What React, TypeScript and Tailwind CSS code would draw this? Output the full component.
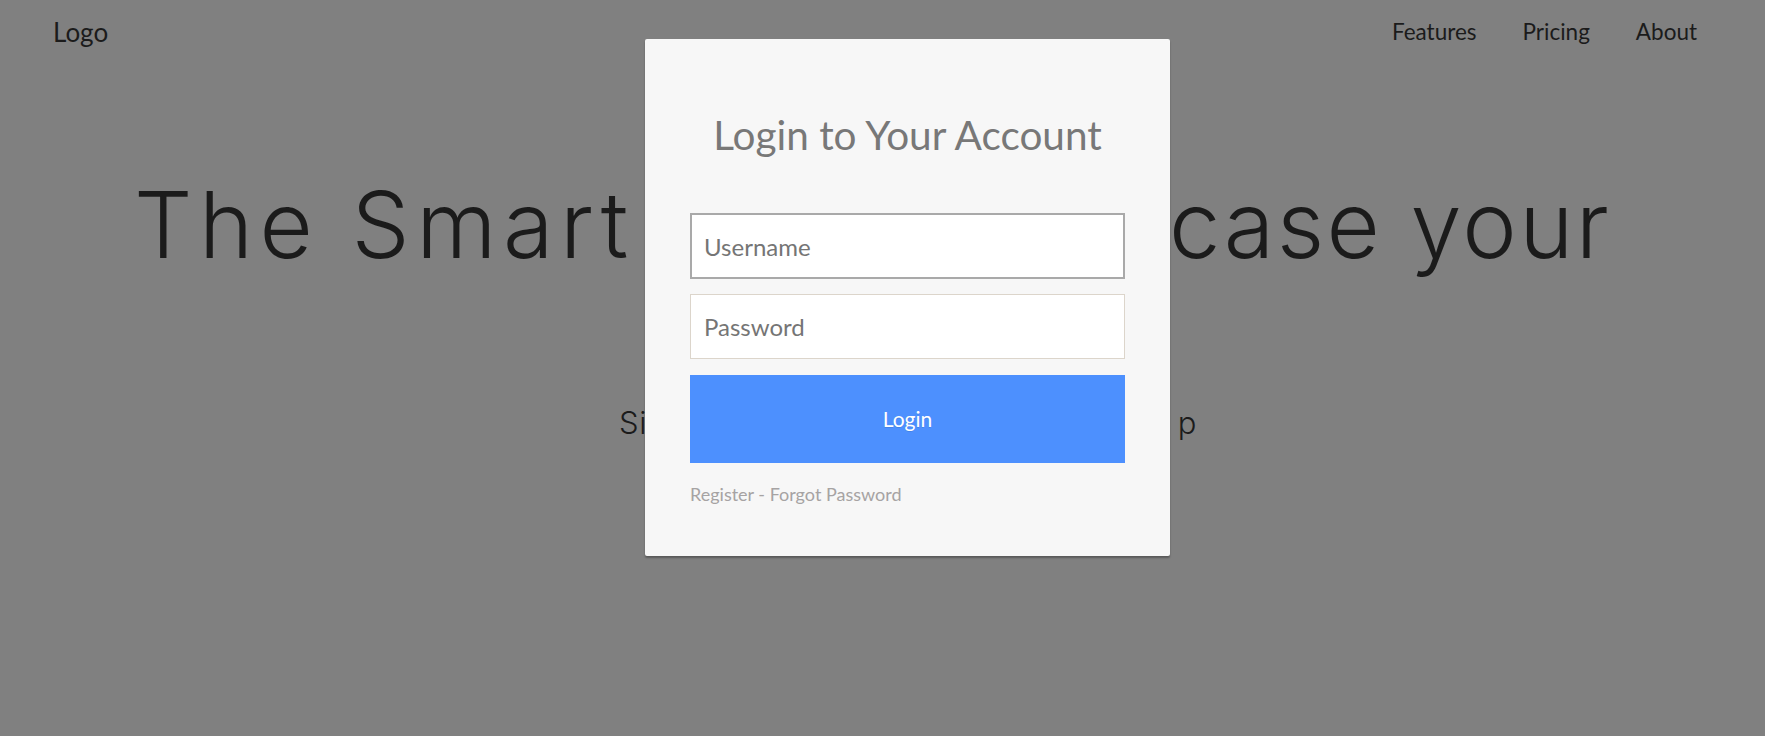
import React from 'react';

const NAV_LINKS = ['Features', 'Pricing', 'About'];

function LoginModal() {
  return (
    <div className="absolute left-[645px] top-[39px] w-[525px] rounded-[2px] bg-[#f7f7f7] px-[45px] pt-[72px] pb-[50px] shadow-[0_2px_2px_rgba(0,0,0,0.3)]">
      <h1 className="text-center text-[40.5px] leading-[48px] text-[#787878]">Login to Your Account</h1>
      <form className="mt-[54px] flex flex-col" onSubmit={(e) => e.preventDefault()}>
        <input
          type="text"
          placeholder="Username"
          className="h-[66px] w-full border-2 border-[#a9a9a9] bg-white px-[12px] text-[24px] text-[#333] outline-none placeholder:text-[#757575]"
        />
        <input
          type="password"
          placeholder="Password"
          className="mt-[15px] h-[65px] w-full border border-[#dcd5cb] bg-white px-[13px] text-[24px] text-[#333] outline-none placeholder:text-[#757575]"
        />
        <button
          type="submit"
          className="mt-[16px] h-[88px] w-full bg-[#4d90fe] text-[21px] text-white [text-shadow:0_1px_rgba(0,0,0,0.1)]"
        >
          Login
        </button>
      </form>
      <div className="mt-[21px] text-[18px] leading-[21.6px] text-[#a6a3a3]">
        <a href="#">Register</a> - <a href="#">Forgot Password</a>
      </div>
    </div>
  );
}

export default function App() {
  return (
    <div className="relative h-[736px] overflow-hidden bg-[#808080] font-['Lato',sans-serif] text-[#1b1b1b]">
      {/* Top nav */}
      <header className="flex h-[64px] items-center justify-between pl-[53px] pr-[68px]">
        <span className="text-[26px]">Logo</span>
        <nav className="flex items-center gap-[46px] text-[22.5px]">
          {NAV_LINKS.map((l) => (
            <a key={l} href="#">{l}</a>
          ))}
        </nav>
      </header>

      {/* Hero (sits under the modal overlay) */}
      <section className="font-['Inter',sans-serif] font-light">
        <h1 className="mt-[115px] whitespace-nowrap pl-[134px] text-[92px] leading-[92px]">
          <span className="tracking-[0.07em]">The Smart</span>
          <span className="tracking-[-0.05em]"> way to show</span>
          <span className="ml-[26px] tracking-[0.026em]">case your</span>
        </h1>
        <p className="mt-[136px] whitespace-nowrap pl-[619px] text-[31px] leading-[31px] tracking-[0.022em]">
          Simple tools to grow your own startu<span className="ml-[8px]">p</span>
        </p>
      </section>

      <LoginModal />
    </div>
  );
}
